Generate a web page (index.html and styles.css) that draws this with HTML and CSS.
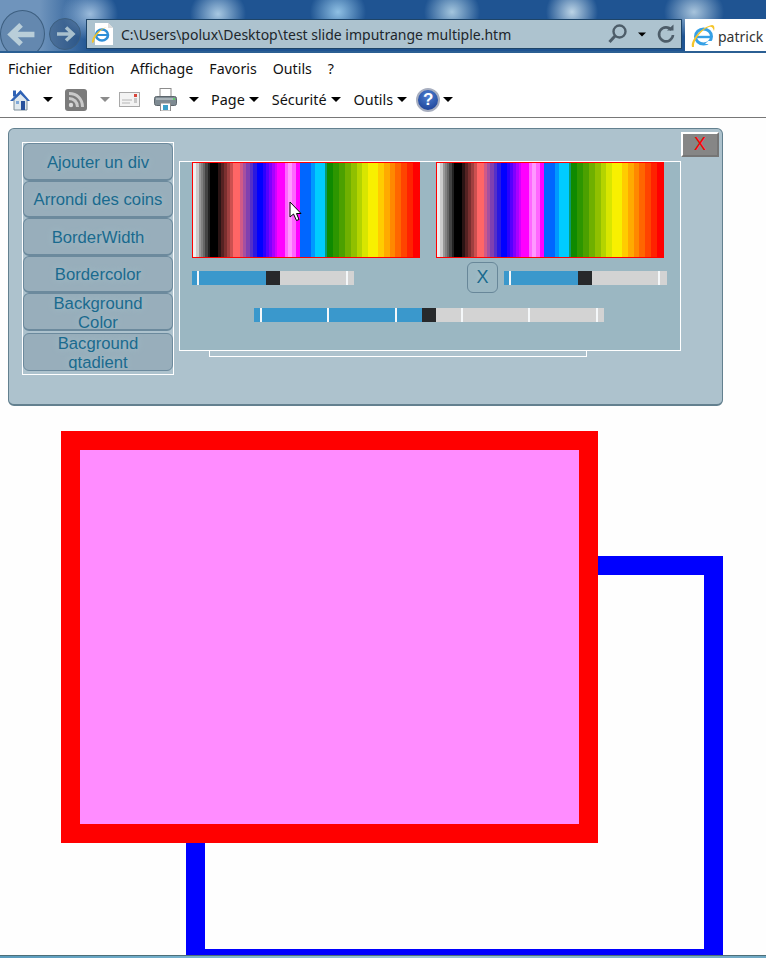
FILE: index.html
```html
<!DOCTYPE html>
<html lang="fr">
<head>
	<meta charset="UTF-8">
	<title>test slide imputrange multiple</title>
	<link rel="stylesheet" href="styles.css">
</head>
<body>
	<header class="browser">
		<div class="nav">
			<div class="nav-btn nav-back">
				<svg width="45" height="45" viewBox="0 0 45 45"><path d="M35 22.500H12M21 12.500L10.500 22.500L21 32.500" fill="none" stroke="#b9ced9" stroke-width="5.500"/></svg>
			</div>
			<div class="nav-btn nav-forward">
				<svg width="30" height="30" viewBox="0 0 30 30"><path d="M7 15H22M16 8.500L23 15L16 21.500" fill="none" stroke="#a9c0cd" stroke-width="3.500"/></svg>
			</div>
			<div class="address">
				<svg class="address-icon" width="24" height="24" viewBox="0 0 24 24">
					<path d="M5 1H18L23 6V23H5Z" fill="#fff"/>
					<path d="M18 1V6H23" fill="#ddd"/>
					<ellipse cx="12" cy="13" rx="6" ry="5.500" fill="none" stroke="#2f8fd8" stroke-width="2.600"/>
					<path d="M6 13H18" stroke="#2f8fd8" stroke-width="2"/>
					<path d="M2 21C1 15 9 7 17 5C11 7 4 15 4 20Z" fill="#f2c42c"/>
				</svg>
				<span class="address-text">C:\Users\polux\Desktop\test slide imputrange multiple.htm</span>
				<svg class="search-icon" width="22" height="22" viewBox="0 0 22 22"><circle cx="12.500" cy="8.500" r="6" fill="none" stroke="#4d5d69" stroke-width="2.400"/><path d="M8 13L2.500 19" stroke="#4d5d69" stroke-width="3"/></svg>
				<span class="caret caret-small"></span>
				<svg class="refresh-icon" width="20" height="20" viewBox="0 0 20 20"><path d="M15.500 6A7 7 0 1 0 17 11" fill="none" stroke="#4d5d69" stroke-width="2.600"/><path d="M11 6.500H17.500V0.500Z" fill="#4d5d69"/></svg>
			</div>
			<div class="tab">
				<svg width="24" height="24" viewBox="0 0 24 24">
					<ellipse cx="12.500" cy="12.500" rx="8" ry="7.500" fill="none" stroke="#35a0e6" stroke-width="3"/>
					<path d="M5 13H20" stroke="#35a0e6" stroke-width="2.400"/>
					<path d="M14 20H22V17H17Z" fill="#fff"/>
					<path d="M1 23C-1 17 10 3 21 1C23 1 24 3 23 7C22 3 20 2 18 3C10 6 2 17 3 23Z" fill="#f5c52a"/>
				</svg>
				<span class="tab-title">patrick</span>
			</div>
		</div>
		<nav class="menu">
			<span>Fichier</span>
			<span>Edition</span>
			<span>Affichage</span>
			<span>Favoris</span>
			<span>Outils</span>
			<span>?</span>
		</nav>
		<div class="toolbar">
			<svg class="tb-home" width="20" height="22" viewBox="0 0 20 22">
				<path d="M4 10V21H17V10L10.500 4Z" fill="#dfe8ee" stroke="#7d8d99"/>
				<path d="M0 12L10.500 1L20 12L17.500 12L10.500 5L3 12Z" fill="#2f62b5"/>
				<rect x="3" y="1.500" width="3" height="6" fill="#2f62b5"/>
				<rect x="11" y="12" width="4" height="9" fill="#27509c"/>
				<rect x="6" y="12" width="3" height="3" fill="#7fa8d8"/>
			</svg>
			<span class="caret tb-gap-home"></span>
			<svg class="tb-rss" width="22" height="22" viewBox="0 0 22 22">
				<rect width="22" height="22" rx="3" fill="#7b7b7b"/>
				<circle cx="6" cy="16" r="2.200" fill="#d9d9d9"/>
				<path d="M4 9.500C9 9.500 12.500 13 12.500 18M4 4.500C12 4.500 17.500 10 17.500 18" fill="none" stroke="#c9c9c9" stroke-width="3"/>
			</svg>
			<span class="caret caret-muted tb-gap-rss"></span>
			<svg class="tb-mail" width="21" height="15" viewBox="0 0 21 15">
				<rect x="0.500" y="0.500" width="20" height="14" fill="#f3f3f3" stroke="#a8a8a8"/>
				<path d="M3 8H13M3 11H11" stroke="#b5b5b5"/>
				<rect x="15" y="2" width="3" height="3" fill="#d8453b"/>
				<rect x="15" y="6" width="3" height="5" fill="#c8c8c8"/>
			</svg>
			<svg class="tb-print" width="23" height="23" viewBox="0 0 23 23">
				<rect x="6" y="0.500" width="11" height="9" fill="#fff" stroke="#8c8c8c"/>
				<rect x="0.500" y="8.500" width="22" height="9" rx="2" fill="#7e8a92" stroke="#5d666d"/>
				<rect x="2" y="10" width="19" height="2" fill="#aab4ba"/>
				<rect x="19" y="10" width="2" height="2" fill="#5fcf6a"/>
				<rect x="6.500" y="15" width="10" height="8" fill="#fff" stroke="#8c8c8c"/>
				<rect x="9" y="17" width="5" height="5" fill="#3c9fc9"/>
			</svg>
			<span class="caret tb-gap-print"></span>
			<span class="tb-label">Page</span>
			<span class="caret tb-gap-label"></span>
			<span class="tb-label">Sécurité</span>
			<span class="caret tb-gap-label"></span>
			<span class="tb-label">Outils</span>
			<span class="caret tb-gap-outils"></span>
			<span class="help">?</span>
			<span class="caret tb-gap-help"></span>
		</div>
	</header>

	<main class="page">
		<section class="panel">
			<button class="close">X</button>
			<div class="actions">
				<button class="action">Ajouter un div</button>
				<button class="action">Arrondi des coins</button>
				<button class="action">BorderWidth</button>
				<button class="action">Bordercolor</button>
				<button class="action action-wrapped">Background Color</button>
				<button class="action action-wrapped action-last">Bacground qtadient</button>
			</div>
			<div class="editor">
				<div class="editor-back"></div>
				<div class="palettes">
					<div class="palette"></div>
					<div class="palette"></div>
				</div>
				<div class="controls">
					<div class="slider slider-first">
						<div class="slider-fill" style="width: 74px"></div>
						<div class="slider-thumb"></div>
						<i class="tick" style="left: 5px"></i>
						<i class="tick" style="left: 154px"></i>
					</div>
					<button class="clear">X</button>
					<div class="slider slider-second">
						<div class="slider-fill" style="width: 74px"></div>
						<div class="slider-thumb"></div>
						<i class="tick" style="left: 5px"></i>
						<i class="tick" style="left: 154px"></i>
					</div>
				</div>
				<div class="slider slider-long">
					<div class="slider-fill" style="width: 168px"></div>
					<div class="slider-thumb"></div>
					<i class="tick" style="left: 6px"></i>
					<i class="tick" style="left: 73px"></i>
					<i class="tick" style="left: 141px"></i>
					<i class="tick" style="left: 207px"></i>
					<i class="tick" style="left: 274px"></i>
					<i class="tick" style="left: 342px"></i>
				</div>
				<svg class="cursor" width="14" height="21" viewBox="0 0 14 21"><path d="M1 1V16L4.500 13L7.500 19.500L10 18.500L7.500 12.500H12Z" fill="#fff" stroke="#000"/></svg>
			</div>
		</section>
		<div class="box box-blue"></div>
		<div class="box box-red"></div>
	</main>
	<footer class="taskbar"></footer>
</body>
</html>
```
FILE: styles.css
```css
* {
	box-sizing: border-box;
}

body {
	margin: 0;
	height: 958px;
	overflow: hidden;
	display: flex;
	flex-direction: column;
	background-color: #fefefe;
	font-family: "Noto Sans", sans-serif;
	color: #111111;
}

/* browser chrome */
.nav {
	height: 53px;
	padding-top: 10px;
	display: flex;
	align-items: flex-start;
	overflow: hidden;
	border-bottom: 2px solid #2b5f93;
	background-color: #1f5492;
	background-image:
		radial-gradient(ellipse 28px 26px at 90px 14px, #9cbcdc, transparent),
		radial-gradient(ellipse 28px 26px at 218px 14px, #a8c8e2, transparent),
		radial-gradient(ellipse 28px 26px at 338px 12px, #8fc0e4, transparent),
		radial-gradient(ellipse 28px 26px at 452px 12px, #a4c6de, transparent),
		radial-gradient(ellipse 26px 26px at 572px 12px, #bcd4e6, transparent),
		radial-gradient(ellipse 30px 26px at 694px 12px, #a8c4dc, transparent),
		linear-gradient(90deg, #6f94bc 0, #6f94bc 40px, transparent 90px);
}

.nav-btn {
	flex: none;
	border: 1px solid #3d5f80;
	border-radius: 50%;
	display: flex;
	align-items: center;
	justify-content: center;
	background-color: rgba(60, 90, 125, 0.2);
}

.nav-back {
	width: 45px;
	height: 48px;
}

.nav-forward {
	width: 32px;
	height: 32px;
	margin: 8px 5px 0 4px;
	background-color: rgba(40, 70, 105, 0.35);
}

.address {
	width: 596px;
	height: 30px;
	margin-top: 9px;
	padding-left: 3px;
	display: flex;
	align-items: center;
	background-color: #adc3cf;
	border: 1px solid #1d4468;
	font-size: 14px;
	color: #20262b;
}

.address-icon {
	margin-right: 7px;
}

.address-text {
	flex: 1;
	padding-top: 1px;
	white-space: nowrap;
}

.search-icon {
	margin-right: 8px;
}

.caret-small {
	margin-right: 9px;
	transform: scale(0.8);
	border-top-color: #5f6f7b;
}

.refresh-icon {
	margin-right: 5px;
}

.tab {
	width: 81px;
	height: 33px;
	margin: 9px 0 0 3px;
	padding-left: 6px;
	display: flex;
	align-items: center;
	gap: 3px;
	background-color: #ffffff;
	font-size: 14px;
	color: #333333;
}

.tab-title {
	padding-top: 2px;
}

.menu {
	height: 30px;
	padding-left: 8px;
	display: flex;
	align-items: center;
	gap: 16px;
	font-size: 14.200px;
	background-color: #ffffff;
}

.toolbar {
	height: 35px;
	padding: 0 0 1px 10px;
	display: flex;
	align-items: center;
	font-size: 14.400px;
	background-color: #ffffff;
	border-bottom: 1px solid #777777;
}

.caret {
	flex: none;
	width: 0;
	height: 0;
	border-left: 5px solid transparent;
	border-right: 5px solid transparent;
	border-top: 5px solid #000000;
}

.caret-muted {
	border-top-color: #8c8c8c;
}

.tb-gap-home {
	margin: 0 12px 0 13px;
}

.tb-gap-rss {
	margin: 0 9px 0 13px;
}

.tb-mail {
	margin-right: 14px;
}

.tb-gap-print {
	margin: 0 12px;
}

.tb-gap-label {
	margin: 0 13px 0 4px;
}

.tb-gap-outils {
	margin: 0 9px 0 4px;
}

.help {
	width: 24px;
	height: 24px;
	border-radius: 50%;
	border: 2px solid #a8afc0;
	display: flex;
	align-items: center;
	justify-content: center;
	background: radial-gradient(circle at 50% 30%, #4d7fd0, #16398f);
	font: bold 17px "Liberation Sans", sans-serif;
	color: #ffffff;
}

.tb-gap-help {
	margin-left: 3px;
}

/* page */
.page {
	flex: 1;
	position: relative;
	overflow: hidden;
	padding: 10px 0 0 8px;
}

.panel {
	position: relative;
	width: 715px;
	height: 278px;
	padding: 13px 41px 0 13px;
	display: flex;
	align-items: flex-start;
	gap: 5px;
	background-color: #adc2cd;
	border: 1px solid #63808f;
	border-bottom-width: 2px;
	border-radius: 6px;
}

.close {
	position: absolute;
	top: 3px;
	right: 3px;
	width: 38px;
	height: 25px;
	padding: 0;
	background-color: #868686;
	border: 2px solid;
	border-color: #ffffff #757575 #757575 #ffffff;
	font: 18px "Liberation Sans", sans-serif;
	color: #ff0000;
}

.actions {
	flex: none;
	width: 152px;
	padding-bottom: 3px;
	border: 1px solid #ffffff;
}

.action {
	display: block;
	width: 100%;
	height: 37.500px;
	padding: 2px 9px 0;
	overflow: hidden;
	background-color: #98aebb;
	border: 1px solid #6c8a9d;
	border-bottom-width: 2px;
	border-radius: 6px;
	font: 16.700px/19px "Liberation Sans", sans-serif;
	color: #1a6a8e;
	text-shadow: 0 0 7px #a4c2cc;
}

.action-wrapped {
	padding-top: 0;
}

.action-last {
	margin-top: 2.500px;
	border-bottom-width: 1px;
}

.editor {
	position: relative;
	width: 502px;
	height: 190px;
	margin-top: 19px;
	padding: 0 12px;
	background-color: #9bb7c2;
	border: 1px solid #ffffff;
}

.editor-back {
	position: absolute;
	left: 29px;
	right: 93px;
	top: 100%;
	height: 7px;
	border: 1px solid #ffffff;
	border-top: 0;
}

.palettes {
	display: flex;
	gap: 16px;
}

.palette {
	width: 228px;
	height: 96px;
	border: 1px solid #ff0000;
	background-image: linear-gradient(90deg,
		#eeeeee 0 3px, #cccccc 3px 6px, #999999 6px 8px, #808080 8px 10px, #666666 10px 12px,
		#444444 12px 15px, #222222 15px 17px, #000000 17px 25px, #2a1414 25px 28px, #552222 28px 31px,
		#7a2f2f 31px 34px, #a04040 34px 37px, #cc5050 37px 40px, #ff6666 40px 47px, #d05a88 47px 50px,
		#a550a0 50px 53px, #8040b0 53px 57px, #5530c8 57px 60px, #2a18e0 60px 64px, #0000ff 64px 70px,
		#2a00ff 70px 73px, #5500ff 73px 76px, #8000ff 76px 79px, #aa00ff 79px 82px, #d400ff 82px 84px,
		#ff00ff 84px 92px, #ff66ff 92px 95px, #ff99ff 95px 99px, #ff66ff 99px 103px, #ff00ff 103px 107px,
		#0066ff 107px 118px, #0099ff 118px 122px, #00ccff 122px 132px, #0a9a70 132px 134px, #0f8a00 134px 140px,
		#2d9600 140px 146px, #4ba000 146px 152px, #6fb000 152px 158px, #90c000 158px 164px, #b4d400 164px 169px,
		#d8e600 169px 175px, #f8f000 175px 185px, #ffcc00 185px 191px, #ffaa00 191px 197px, #ff8800 197px 202px,
		#ff6600 202px 208px, #ff4400 208px 214px, #ff2200 214px 220px, #ff0000 220px 228px);
}

.controls {
	height: 31px;
	margin-top: 4px;
	display: flex;
	align-items: center;
}

.slider {
	position: relative;
	height: 14px;
	display: flex;
	background-color: #d3d3d3;
}

.slider-first {
	width: 162px;
}

.slider-second {
	width: 163px;
}

.slider-long {
	width: 350px;
	margin: 15px 0 0 62px;
}

.slider-fill {
	background-color: #3a98cc;
}

.slider-thumb {
	width: 14px;
	background-color: #27292b;
}

.tick {
	position: absolute;
	top: 0;
	width: 2px;
	height: 100%;
	background-color: #f4f7f9;
}

.clear {
	width: 31px;
	height: 31px;
	margin: 0 6px 0 113px;
	padding: 0;
	background-color: #9bb7c2;
	border: 1px solid #688799;
	border-radius: 6px;
	font: 18px "Liberation Sans", sans-serif;
	color: #1a6a8e;
	text-shadow: 0 0 5px #a9c9d0;
}

.cursor {
	position: absolute;
	left: 109px;
	top: 39px;
}

/* draggable squares */
.box {
	position: absolute;
	width: 537px;
	height: 412px;
	border: 19px solid;
}

.box-blue {
	left: 186px;
	top: 438px;
	border-color: #0000ff;
}

.box-red {
	left: 61px;
	top: 313px;
	border-color: #ff0000;
	background-color: #ff8cff;
}

.taskbar {
	flex: none;
	height: 3px;
	border-top: 1px solid #4d6f78;
	background-image: linear-gradient(90deg, #5a9bbd, #7db6d0 30%, #9cc6d8 55%, #7fb4cc 80%, #6fa8c4);
}
```
